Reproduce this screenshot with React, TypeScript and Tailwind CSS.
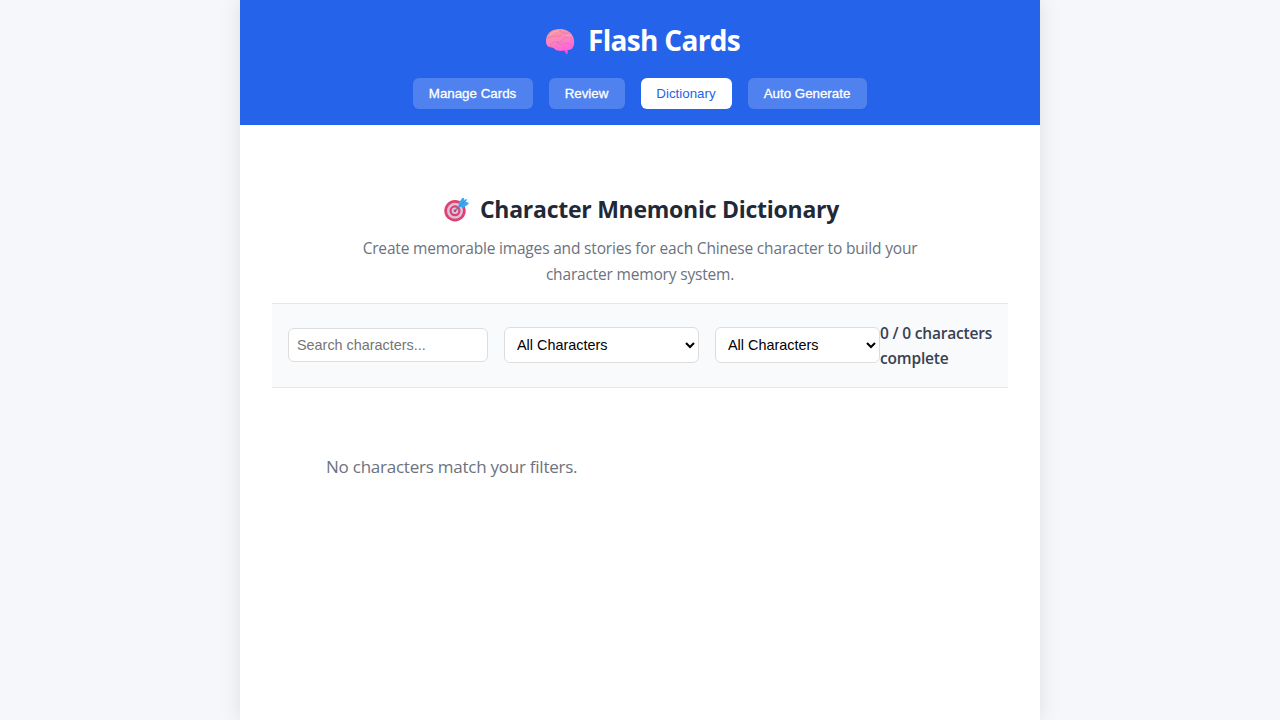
import React from 'react';

const ui = "font-['Open_Sans','Noto_Sans',sans-serif]";
const control = "font-['Liberation_Sans',Arial,sans-serif]";

function Brain() {
  return (
    <svg viewBox="0 0 30 28" className="mt-[5px] h-7 w-[30px] shrink-0" aria-hidden="true">
      <defs>
        <linearGradient id="brain" x1="0.2" y1="0" x2="0.55" y2="1">
          <stop offset="0" stopColor="#f59a9d" />
          <stop offset="0.5" stopColor="#fc86bd" />
          <stop offset="1" stopColor="#ff62dc" />
        </linearGradient>
      </defs>
      <path d="M17 20 L21.500 26.3 Q22.8 26.400 22.800 24 L23 20Z" fill="#f250cc" />
      <path d="M1 13.500C.8 7 5 2 12 1.200c7-.8 13 1.500 15.500 6.500 2.200 3.500 2.200 9 .3 12-1.700 2.300-5 2.800-8 2.300-3 1.300-7 1.300-9.500-.5-1.800-1.500-2.700-2-5-2.200C2.600 19 1 17 1 13.500Z" fill="url(#brain)" />
      <path d="M2.500 10c3-.2 4.500-1.700 7-2 2.500-.2 4 .8 6.500-.5M15 2.500c1.500 2.500 4.500 3.500 8 2.500M5.500 18c.5-3 3-4.500 6-4 3.200.5 5.500-.5 7-3M12 14c1 2 3.500 2.600 6 1.800 3-1 5-1 8 .8M20 10c2-1.500 4.500-1.500 6.500 0" fill="none" stroke="#e0679f" strokeWidth="1" strokeLinecap="round" opacity=".5" />
      <path d="M5 7c2-2.800 5-4 8-4M20 7.500c2-.4 4 0 5.500 1" fill="none" stroke="#ffb7c7" strokeWidth="1" strokeLinecap="round" opacity=".6" />
    </svg>
  );
}

function Target() {
  return (
    <svg viewBox="0 0 25 25" className="mt-px h-[25px] w-[25px] shrink-0" aria-hidden="true">
      <circle cx="11" cy="13.800" r="10.700" fill="#e0406f" />
      <circle cx="11" cy="13.800" r="8" fill="#d9c3da" />
      <circle cx="11" cy="13.800" r="5.500" fill="#e0406f" />
      <circle cx="11" cy="13.800" r="3.300" fill="#d9c3da" />
      <circle cx="11" cy="13.800" r="1.300" fill="#c33868" />
      <path d="M11 13.800L16.500 8.500" stroke="#7a6c9e" strokeWidth="1.300" />
      <path d="M14.500 9.800L15 5.500 18.500 .8 20 1.200 20.500 3.500 22 1.800 23 2.700 21.800 5 24.500 5.500 24.500 7 19.800 10.500Z" fill="#3fa5f2" />
      <path d="M15.500 9.500L20.500 4.500" stroke="#2f8de0" strokeWidth="1" />
    </svg>
  );
}

const tabs = [
  { label: 'Manage Cards', width: 'w-[120px]' },
  { label: 'Review', width: 'w-[76px]' },
  { label: 'Dictionary', width: 'w-[91px]', active: true },
  { label: 'Auto Generate', width: 'w-[119px]' },
];

export default function App() {
  return (
    <div className={`min-h-screen bg-[#f5f7fb] ${ui}`}>
      <div className="mx-auto min-h-screen w-[800px] bg-white shadow-[0_0_20px_rgba(0,0,0,0.1)]">
        <header className="flex h-[125px] flex-col items-center bg-[#2563eb] pt-4 text-white">
          <h1 className="mb-4 flex h-[46px] items-center gap-[13px] pl-[5px] text-[28px] font-bold whitespace-nowrap">
            <Brain />
            <span className="pt-[2px] tracking-[-0.68px]">Flash Cards</span>
          </h1>
          <nav className="flex gap-4">
            {tabs.map((t) => (
              <button
                key={t.label}
                className={`h-[31px] rounded-md pr-px text-[13.33px] whitespace-nowrap ${control} ${t.width} ${
                  t.active
                    ? 'bg-white text-[#2563eb]'
                    : 'bg-white/20 text-white [-webkit-text-stroke:0.3px_white]'
                }`}
              >
                {t.label}
              </button>
            ))}
          </nav>
        </header>
        <main className="px-8 pt-[65px]">
          <div className="flex flex-col items-center text-center">
            <h2 className="flex h-[38px] items-center gap-[11px] pl-[3px] text-[23px] font-bold whitespace-nowrap text-[#1f2937]">
              <Target />
              <span className="pt-px tracking-[-0.26px]">Character Mnemonic Dictionary</span>
            </h2>
            <p className="mt-2 mb-4 text-[15.5px] leading-[25.6px] tracking-[-0.18px] whitespace-nowrap text-[#6b7280]">
              <span>Create memorable images and stories for each Chinese character to build your</span>
              <br />
              <span>character memory system.</span>
            </p>
          </div>
          <section className="flex h-[85px] items-center border-y border-[#e5e7eb] bg-[#f9fafc] px-4 pb-px">
            <input
              placeholder="Search characters..."
              className={`mr-4 h-[34px] w-[200px] shrink-0 rounded-md border border-[#ddd] bg-white px-2 text-[14.4px] placeholder:text-[#757575] ${control}`}
            />
            <select className={`mr-4 h-9 w-[195px] shrink-0 rounded-md border border-[#ddd] bg-white px-2 text-[14.4px] text-black ${control}`}>
              <option>All Characters</option>
            </select>
            <select className={`h-9 w-[165px] shrink-0 rounded-md border border-[#ddd] bg-white px-2 text-[14.4px] text-black ${control}`}>
              <option>All Characters</option>
            </select>
            <p className="pt-px text-[15.5px] leading-[25px] font-semibold tracking-[-0.18px] whitespace-nowrap text-[#374151]">
              <span>0 / 0 characters</span>
              <br />
              <span>complete</span>
            </p>
          </section>
          <p className="mt-[64px] ml-[54px] text-[17px] leading-[29px] tracking-[-0.24px] text-[#6b7280]">
            <span>No characters match your filters.</span>
          </p>
        </main>
      </div>
    </div>
  );
}
